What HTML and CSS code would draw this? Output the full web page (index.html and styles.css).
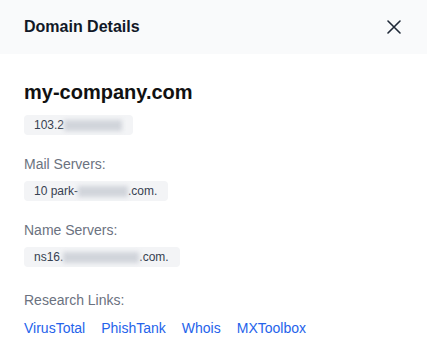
FILE: index.html
```html
<!DOCTYPE html>
<html>
<head>
<meta charset="utf-8">
<link rel="stylesheet" href="styles.css">
</head>
<body>
<div class="panel">
  <header class="header">
    <h2 class="title">Domain Details</h2>
    <button class="close" aria-label="Close">
      <svg width="14" height="14" viewBox="0 0 14 14"><path d="M1 1L13 13M13 1L1 13" stroke="#1f2937" stroke-width="1.6" stroke-linecap="round"/></svg>
    </button>
  </header>
  <main class="content">
    <h1 class="domain">my-company.com</h1>
    <div class="chips"><span class="chip">103.2<span class="blur" style="width:58px"></span></span></div>

    <section class="group">
      <div class="label">Mail Servers:</div>
      <div class="chips"><span class="chip">10 park-<span class="blur" style="width:50px"></span>.com.</span></div>
    </section>

    <section class="group">
      <div class="label">Name Servers:</div>
      <div class="chips"><span class="chip">ns16.<span class="blur" style="width:76px"></span>.com.</span></div>
    </section>

    <section class="group group-links">
      <div class="label">Research Links:</div>
      <div class="links">
        <a href="#">VirusTotal</a>
        <a href="#">PhishTank</a>
        <a href="#">Whois</a>
        <a href="#">MXToolbox</a>
      </div>
    </section>
  </main>
</div>
</body>
</html>
```
FILE: styles.css
```css
* { box-sizing: border-box; }
html, body { margin: 0; padding: 0; background: #ffffff; }
body { font-family: "Liberation Sans", Arial, sans-serif; }
.panel { width: 427px; height: 359px; background: #fff; }
.header {
  height: 54px;
  background: #f9fafb;
  display: flex;
  align-items: center;
  justify-content: space-between;
  padding: 0 24px 0 24px;
}
.title { margin: 0; font-size: 16px; font-weight: 700; color: #111827; line-height: 20px; }
.close { border: 0; background: transparent; padding: 0; width: 14px; height: 14px; display: flex; margin-right: 2px; }
.content { padding: 26px 24px 0 24px; }
.domain { margin: 0; font-size: 20px; font-weight: 700; color: #111111; line-height: 24px; }
.chips { margin-top: 11px; display: flex; }
.chip {
  display: inline-flex; align-items: center;
  background: #f3f4f6; border-radius: 4px;
  font-size: 12px; color: #374151;
  height: 20px; padding: 0 11px 0 10px;
}
.blur { display: inline-block; height: 11px; background: #d1d5db; filter: blur(2px); }
.group { margin-top: 20px; }
.group-links { margin-top: 24px; }
.label { font-size: 14px; color: #6b7280; line-height: 18px; }
.group .chips { margin-top: 8px; }
.links { margin-top: 10px; display: flex; gap: 16px; }
.links a { font-size: 14px; color: #2563eb; text-decoration: none; line-height: 18px; }
```
